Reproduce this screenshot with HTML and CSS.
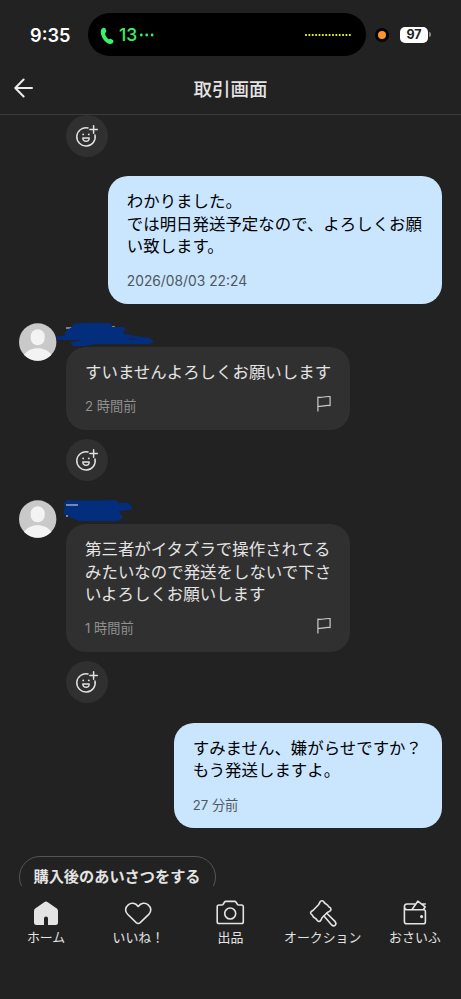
FILE: index.html
```html
<!DOCTYPE html>
<html lang="ja">
<head>
<meta charset="utf-8">
<title>取引画面</title>
<link rel="stylesheet" href="styles.css">
</head>
<body>
<svg class="defs" width="0" height="0" aria-hidden="true">
  <symbol id="smile" viewBox="0 0 42 42">
    <g fill="none" stroke="#e2e2e2" stroke-width="1.5" stroke-linecap="round">
      <path d="M22 12.900A9.200 9.200 0 1 0 29 20"/>
      <path d="M27.600 10.800v7.400M23.900 14.500h7.400"/>
      <path d="M16.800 23h6.400c0 4.400-6.400 4.400-6.400 0z" stroke-width="1.400" stroke-linejoin="round"/>
    </g>
    <circle cx="17.200" cy="19.400" r=".9" fill="#e2e2e2"/>
    <circle cx="22.800" cy="19.400" r=".9" fill="#e2e2e2"/>
  </symbol>
  <symbol id="flag" viewBox="0 0 16 18">
    <path d="M1.900 16.500V2.200c4.600 1.200 7.500-1.600 12.200-.5v8.900c-4.600-1.100-7.600 1.600-12.200.5" fill="none" stroke="#c9c9c9" stroke-width="1.200" stroke-linejoin="round"/>
  </symbol>
  <symbol id="person" viewBox="0 0 38 38">
    <circle cx="18.700" cy="19" r="18.700" fill="#c9c9c9"/>
    <rect x="11.700" y="6.300" width="14" height="16" rx="7" fill="#f3f3f3"/>
    <path d="M5 31.800C8.200 27.500 12.700 25.200 18.700 25.200s10.500 2.300 13.700 6.600A18.700 18.700 0 0 1 5 31.800z" fill="#f3f3f3"/>
  </symbol>
</svg>
<div class="screen">
  <div class="status">
    <div class="clock">9:35</div>
    <div class="island">
      <svg class="phone" width="14" height="18" viewBox="0 0 14 18"><path d="M1.200 2.500C2.500.4 4.800.1 5.600 1.800l.6 2.300c.3 1.200-1.400 1.500-1.100 2.800.6 2.100 1.800 3.800 3.200 5 .9.7 1.600-.5 2.700 0l1.900 1.200c1.500 1-.1 4-2.600 4C5.700 17 .9 10 .8 5 .8 4 .8 3.200 1.200 2.500z" fill="#35f36b"/></svg>
      <span class="call">13</span>
      <svg class="more" width="16" height="4" viewBox="0 0 16 4" fill="#35f36b"><circle cx="2.300" cy="2" r="1.400"/><circle cx="7.700" cy="2" r="1.400"/><circle cx="13.100" cy="2" r="1.400"/></svg>
      <svg class="wave" width="48" height="4" viewBox="0 0 48 4"><path d="M2 2h45" stroke="#efff20" stroke-width="2.200" stroke-linecap="round" stroke-dasharray="0 3.370"/></svg>
    </div>
    <div class="mic"></div>
    <div class="battery"><span>97</span></div>
    <div class="battery-tip"></div>
  </div>
  <header class="header">
    <svg class="back" width="20" height="20" viewBox="0 0 20 20"><path d="M9.600 1.500L1.300 10l8.300 8.500M1.500 10H18" fill="none" stroke="#ececec" stroke-width="2" stroke-linecap="round" stroke-linejoin="round"/></svg>
    <h1>取引画面</h1>
  </header>
  <main class="thread">
    <div class="react first"><svg><use href="#smile"/></svg></div>
    <div class="bubble mine">
      <p>わかりました。<br>では明日発送予定なので、よろしくお願<br>い致します。</p>
      <time class="date">2026/08/03 22:24</time>
    </div>
    <div class="received">
      <svg class="avatar"><use href="#person"/></svg>
      <div class="content">
        <svg class="name" width="104" height="24" viewBox="0 0 104 24">
          <path d="M9 5h7M55 4h3" stroke="#e4e4e4" stroke-width="1.200"/>
          <path d="M16 1Q30-1 52 0Q56 1 55 4L67 4Q71 7 66 9L67 11L92 15Q99 18 95 20L91 21L38 21L29 23L16 23Q12 20 15 19L26 17L1 17Q-2 14 1 13L8 13Q7 10 10 7L15 4Z" fill="#032e7e"/>
          <path d="M70 17l7-2 3 1z" fill="#222"/>
        </svg>
        <div class="bubble theirs">
          <p>すいませんよろしくお願いします</p>
          <div class="foot"><time>2 時間前</time><svg class="flag"><use href="#flag"/></svg></div>
        </div>
        <div class="react"><svg><use href="#smile"/></svg></div>
      </div>
    </div>
    <div class="received">
      <svg class="avatar"><use href="#person"/></svg>
      <div class="content">
        <svg class="name" width="104" height="24" viewBox="0 0 104 24">
          <path d="M10 0Q30 1 58 0Q62 1 61 3L71 3L75 7Q76 10 71 10L62 11L63 14Q67 16 65 19L60 21L22 21L15 18L9 16Q5 12 8 8L7 3Z" fill="#032e7e"/>
          <path d="M9 5h12M9 16h2" stroke="#e4e4e4" stroke-width="1.200"/>
        </svg>
        <div class="bubble theirs">
          <p>第三者がイタズラで操作されてる<br>みたいなので発送をしないで下さ<br>いよろしくお願いします</p>
          <div class="foot"><time>1 時間前</time><svg class="flag"><use href="#flag"/></svg></div>
        </div>
        <div class="react"><svg><use href="#smile"/></svg></div>
      </div>
    </div>
    <div class="bubble mine">
      <p>すみません、嫌がらせですか？<br>もう発送しますよ。</p>
      <time>27 分前</time>
    </div>
    <button class="chip">購入後のあいさつをする</button>
  </main>
  <nav class="tabs">
    <a><svg width="30" height="30" viewBox="0 0 30 30"><path class="solid" d="M13.200 4.200q1.800-1.300 3.600 0l9 6.400q1.200.9 1.200 2.400v11.500q0 2.500-2.500 2.500H17V20.500q0-2-2-2t-2 2V27H5.500Q3 27 3 24.500V13q0-1.500 1.200-2.400z"/></svg><span>ホーム</span></a>
    <a><svg width="30" height="30" viewBox="0 0 30 30"><path d="M15.200 8.500C12.500 4.600 8 4.500 5.200 6.800 1.800 9.600 1.900 13.600 4.600 16.300L13.200 24.600q2 1.800 4 0l8.600-8.300c2.700-2.700 2.800-6.700-.6-9.500C22.400 4.500 17.900 4.600 15.200 8.500z"/></svg><span>いいね！</span></a>
    <a><svg width="30" height="30" viewBox="0 0 30 30"><path d="M4 7h3q.6 0 1-.5l1.600-2.500q.4-.6 1.200-.6h8.900q.8 0 1.200.6l1.600 2.500q.4.500 1 .5h3q1.800 0 1.800 1.800v14.900q0 1.800-1.800 1.800H4q-1.800 0-1.800-1.800V8.800Q2.200 7 4 7z"/><circle cx="15.200" cy="15.500" r="5.500"/></svg><span>出品</span></a>
    <a><svg width="30" height="30" viewBox="0 0 30 30"><path d="M12.300 3.500Q14 2 15.700 3.500Q16 5 18 6Q20 7 20.700 8.800Q22.800 9.600 23 11Q23.200 12.400 21.500 13.400L19.300 14.500L14 19.800L13 22Q11.500 24.300 9.600 22.900Q8.500 20.800 6.800 20Q5 19.200 4.400 17.300Q2.300 16.200 2.600 14.500Q3 13.200 5.200 12.200L10.500 6.800Z"/><path d="M18.700 15.200l8.300 8.200q1.700 2 .3 3.700-1.800 1.700-3.600-.2l-7.700-9"/></svg><span>オークション</span></a>
    <a><svg width="30" height="30" viewBox="0 0 30 30"><path d="M14.800 6H7Q4.400 6 4.400 8.800v14.700q0 2.300 2.300 2.300h16.600q2.100 0 2.100-2.100V13.500q0-1.800-1.800-1.800H7q-2.600 0-2.600-2.900M12 11.500L17.800 3.200l7.400 5.600-1.900 2.900M22.300 6h3"/><circle cx="21.600" cy="18.600" r=".8"/></svg><span>おさいふ</span></a>
  </nav>
</div>
</body>
</html>
```

FILE: styles.css
```css
* { box-sizing: border-box; }
body {
  margin: 0;
  background: #222;
  color: #e4e4e4;
  font-family: Inter, "Noto Sans CJK JP", sans-serif;
  text-spacing-trim: space-all;
}
.defs { position: absolute; }
svg { display: block; }
.screen {
  display: flex;
  flex-direction: column;
  width: 461px;
  height: 999px;
  overflow: hidden;
}
.status {
  display: flex;
  align-items: center;
  flex: none;
  height: 69px;
}
.clock {
  width: 88px;
  padding-left: 30px;
  color: #fff;
  font-size: 18.2px;
  font-weight: 600;
}
.island {
  display: flex;
  align-items: center;
  width: 278px;
  height: 43px;
  padding: 0 14px 0 12px;
  border-radius: 22px;
  background: #000;
}
.phone { margin-top: 2px; }
.call {
  margin-left: 5px;
  color: #35f36b;
  font-size: 17.5px;
  font-weight: 500;
}
.more { margin-left: 2px; }
.wave { margin-left: auto; }
.mic {
  width: 14px;
  height: 14px;
  margin-left: 9px;
  border: 3.5px solid #000;
  border-radius: 50%;
  background: #ff922e;
}
.battery {
  width: 28px;
  height: 16px;
  margin: 0 1px 0 11px;
  border-radius: 5px;
  background: #fff;
  color: #222;
  font-size: 12.5px;
  font-weight: 700;
  line-height: 16px;
  text-align: center;
}
.battery-tip {
  width: 1.5px;
  height: 5px;
  border-radius: 0 2px 2px 0;
  background: #888;
}
.header {
  display: grid;
  grid-template-columns: 60px 1fr 60px;
  align-items: center;
  flex: none;
  height: 46px;
  padding-bottom: 8px;
  border-bottom: 1px solid #3b3b3b;
}
.back { margin-left: 14px; }
h1 {
  margin: 2px 0 0;
  font-size: 18.5px;
  font-weight: 500;
  line-height: 26px;
  text-align: center;
}
.thread {
  display: flex;
  flex-direction: column;
  flex: none;
  height: 771px;
  padding: 0 19px;
  overflow: hidden;
}
.react {
  width: 42px;
  height: 42px;
  margin-top: 9.2px;
  border-radius: 50%;
  background: #303030;
}
.react svg { width: 42px; height: 42px; }
.react.first { flex: none; margin: 0 0 19px 47px; }
.bubble {
  width: fit-content;
  padding: 14px 19px;
  border-radius: 20px;
}
.bubble p {
  margin: 0 0 14.5px;
  font-size: 16.45px;
  line-height: 22.6px;
  white-space: nowrap;
}
.bubble time {
  display: block;
  font-size: 13.2px;
  line-height: 18px;
}
.bubble time.date { font-size: 13.8px; }
.mine {
  flex: none;
  align-self: flex-end;
  padding-right: 20px;
  background: #cae6ff;
  color: #000;
}
.mine time { color: #50565c; }
.theirs {
  padding-bottom: 14.6px;
  background: #303030;
}
.theirs p { margin-bottom: 13.7px; }
.theirs time { color: #919191; }
.foot {
  display: flex;
  justify-content: space-between;
}
.flag { width: 16px; height: 18px; margin: -2px -1px 0 0; }
.received {
  display: flex;
  flex: none;
  margin-top: 18.8px;
}
.received + .bubble { margin-top: 19.4px; }
.avatar { width: 38px; height: 38px; margin-right: 9px; }
.name { margin-left: -9px; overflow: visible; }
.chip {
  flex: none;
  width: 197px;
  height: 42px;
  margin-top: 28.2px;
  padding: 0 1px 0 0;
  border: 1px solid #555;
  border-radius: 21px;
  background: none;
  color: #e4e4e4;
  font: 700 15.2px/40px Inter, "Noto Sans CJK JP", sans-serif;
}
.tabs {
  display: grid;
  grid-template-columns: repeat(5, 1fr);
  flex: none;
  height: 113px;
  padding-top: 12px;
}
.tabs a {
  display: flex;
  flex-direction: column;
  align-items: center;
  font-size: 12.9px;
  line-height: 19px;
  white-space: nowrap;
}
.tabs svg {
  width: 30px;
  height: 30px;
  fill: none;
  stroke: #e4e4e4;
  stroke-width: 1.6;
  stroke-linecap: round;
  stroke-linejoin: round;
}
.tabs .solid {
  fill: #e4e4e4;
  stroke: none;
}
```
